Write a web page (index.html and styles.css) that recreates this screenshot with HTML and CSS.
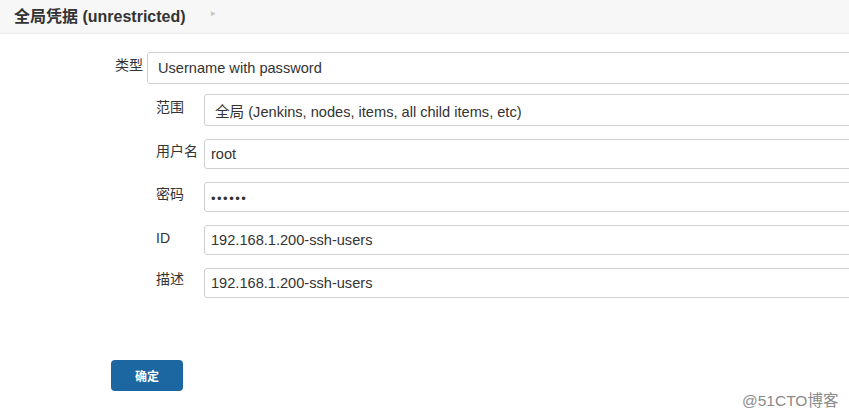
FILE: index.html
```html
<!DOCTYPE html>
<html lang="zh">
<head>
<meta charset="utf-8">
<link rel="stylesheet" href="styles.css">
</head>
<body>
<div class="header">
  <span class="title">全局凭据 (unrestricted)</span>
  <span class="arrow">▸</span>
</div>
<div class="form">
  <div class="row type-row">
    <div class="label type-label">类型</div>
    <div class="control select type-select">Username with password</div>
  </div>
  <div class="nested">
    <div class="row">
      <div class="label">范围</div>
      <div class="control select">全局 (Jenkins, nodes, items, all child items, etc)</div>
    </div>
    <div class="row">
      <div class="label">用户名</div>
      <div class="control text">root</div>
    </div>
    <div class="row">
      <div class="label">密码</div>
      <div class="control text pw">••••••</div>
    </div>
    <div class="row">
      <div class="label">ID</div>
      <div class="control text">192.168.1.200-ssh-users</div>
    </div>
    <div class="row">
      <div class="label">描述</div>
      <div class="control text">192.168.1.200-ssh-users</div>
    </div>
  </div>
  <div class="actions">
    <button class="btn">确定</button>
  </div>
</div>
<div class="watermark">@51CTO博客</div>
</body>
</html>
```

FILE: styles.css
```css
html, body {
  margin: 0;
  padding: 0;
  width: 849px;
  height: 414px;
  overflow: hidden;
  background: #fff;
  font-family: "Liberation Sans", "Noto Sans CJK SC", sans-serif;
  color: #333;
  position: relative;
}
.header {
  height: 34px;
  background: #f7f7f7;
  border-bottom: 1px solid #ececec;
  display: flex;
  align-items: center;
  padding-left: 14px;
  box-sizing: border-box;
}
.title {
  font-size: 16px;
  font-weight: bold;
  color: #333;
  position: relative;
  top: -2px;
}
.arrow {
  margin-left: 25px;
  font-size: 9px;
  color: #c4c4c4;
  position: relative;
  top: -4px;
}
.form {
  padding-top: 18px;
}
.row {
  display: flex;
  align-items: flex-start;
}
.type-row {
  margin-left: 100px;
}
.label {
  font-size: 14px;
  color: #333;
  width: 58px;
  flex: none;
  box-sizing: border-box;
  padding-left: 10px;
  padding-top: 4px;
  line-height: 18px;
}
.type-label {
  width: 43px;
  margin-right: 4px;
  text-align: right;
  padding-left: 0;
}
.control {
  flex: none;
  width: 1000px;
  box-sizing: border-box;
  border: 1px solid #cfcfcf;
  border-radius: 3px;
  background: #fff;
  font-size: 14.6px;
  color: #333;
  display: flex;
  align-items: center;
}
.select {
  height: 32px;
  padding-left: 10px;
}
.text {
  height: 30px;
  padding-left: 6px;
}
.pw {
  font-size: 13px;
  letter-spacing: 1.5px;
  padding-top: 3px;
}
.nested {
  margin-left: 146px;
  margin-top: 10px;
  display: flex;
  flex-direction: column;
  gap: 13px;
}
.nested .row:nth-child(2) .label,
.nested .row:nth-child(3) .label { padding-top: 3px; }
.nested .row:nth-child(5) .label { padding-top: 2px; }
.actions {
  margin-top: 62px;
  margin-left: 111px;
}
.btn {
  width: 72px;
  height: 31px;
  border: none;
  border-radius: 4px;
  background: #1c67a1;
  color: #fff;
  font-family: "Noto Sans CJK SC", sans-serif;
  font-size: 12px;
  font-weight: bold;
  padding: 0;
}
.watermark {
  position: absolute;
  left: 742px;
  top: 388px;
  font-size: 15.5px;
  color: #8a8a8a;
  font-family: "Liberation Sans", "Noto Sans CJK SC", sans-serif;
}
```
